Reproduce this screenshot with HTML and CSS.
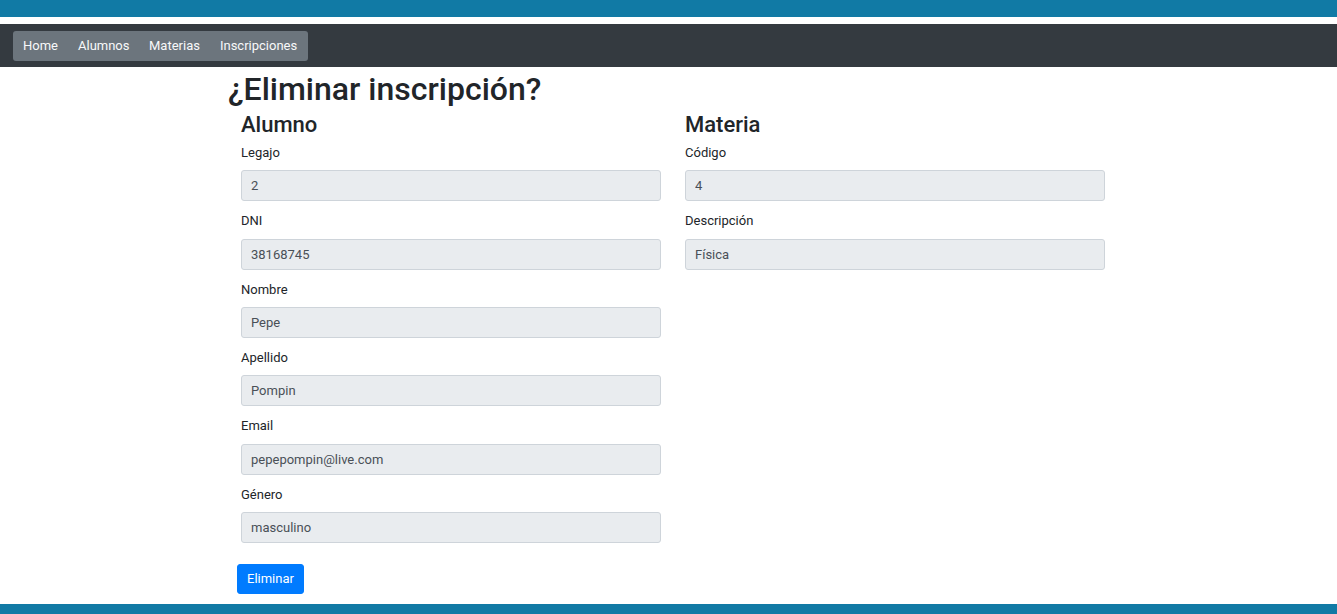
FILE: index.html
```html
<!DOCTYPE html>
<html lang="es">
<head>
<meta charset="utf-8">
<title>Eliminar inscripción</title>
<link rel="stylesheet" href="styles.css">
</head>
<body>
<div class="topbar"></div>
<nav class="navbar">
  <ul class="nav-group">
    <li><a href="#">Home</a></li>
    <li><a href="#">Alumnos</a></li>
    <li><a href="#">Materias</a></li>
    <li><a href="#">Inscripciones</a></li>
  </ul>
</nav>
<main class="content">
  <h1 class="page-title">¿Eliminar inscripción?</h1>
  <form class="form">
    <div class="row">
      <section class="col">
        <h2 class="col-title">Alumno</h2>
        <div class="field"><label>Legajo</label><input class="input" value="2" readonly></div>
        <div class="field"><label>DNI</label><input class="input" value="38168745" readonly></div>
        <div class="field"><label>Nombre</label><input class="input" value="Pepe" readonly></div>
        <div class="field"><label>Apellido</label><input class="input" value="Pompin" readonly></div>
        <div class="field"><label>Email</label><input class="input" value="pepepompin@live.com" readonly></div>
        <div class="field"><label>Género</label><input class="input" value="masculino" readonly></div>
      </section>
      <section class="col">
        <h2 class="col-title">Materia</h2>
        <div class="field"><label>Código</label><input class="input" value="4" readonly></div>
        <div class="field"><label>Descripción</label><input class="input" value="Física" readonly></div>
      </section>
    </div>
    <button type="button" class="btn">Eliminar</button>
  </form>
</main>
<div class="bottombar"></div>
</body>
</html>
```

FILE: styles.css
```css
* { box-sizing: border-box; }
html, body { margin: 0; padding: 0; }
body {
  font-family: Roboto, "Liberation Sans", sans-serif;
  font-size: 13px;
  line-height: 1.5;
  color: #212529;
  background: #fff;
  height: 614px;
  overflow: hidden;
  display: flex;
  flex-direction: column;
}
.topbar { height: 17px; background: #117aa5; margin-bottom: 7px; }
.navbar {
  height: 43px;
  background: #343a40;
  padding: 7px 13px;
}
.nav-group {
  list-style: none;
  margin: 0;
  padding: 0 1px 0 0;
  display: inline-flex;
  height: 30px;
  align-items: center;
  background: #6c757d;
  border-radius: 3px;
}
.nav-group a {
  display: block;
  color: #f8f9fa;
  text-decoration: none;
  padding: 0 10px;
  line-height: 30px;
}
.nav-group li:nth-child(3) a { padding-left: 9.5px; }
.content {
  flex: 1;
  padding-left: 228px;
  width: 1117px;
}
.page-title {
  margin: 3px 0 0;
  font-size: 32px;
  font-weight: 500;
  line-height: 1.2;
}
.form { padding-left: 1px; }
.row { display: flex; gap: 24px; padding: 0 12px; }
.col { flex: 1; }
.col-title {
  margin: 4px 0 4px;
  font-size: 22px;
  font-weight: 500;
  line-height: 1.2;
}
.field { margin-bottom: 10px; }
.field label { display: block; margin-bottom: 8px; line-height: 19.5px; }
.input {
  display: block;
  width: 100%;
  height: 30.9px;
  padding: 0 9px;
  font: inherit;
  color: #495057;
  background: #e9ecef;
  border: 1px solid #ced4da;
  border-radius: 3px;
}
.btn {
  display: block;
  margin: 11px 0 0 8px;
  height: 30px;
  padding: 0 9px;
  font: inherit;
  color: #fff;
  background: #007bff;
  border: 1px solid #007bff;
  border-radius: 3px;
}
.bottombar { height: 10px; background: #117aa5; }
```
